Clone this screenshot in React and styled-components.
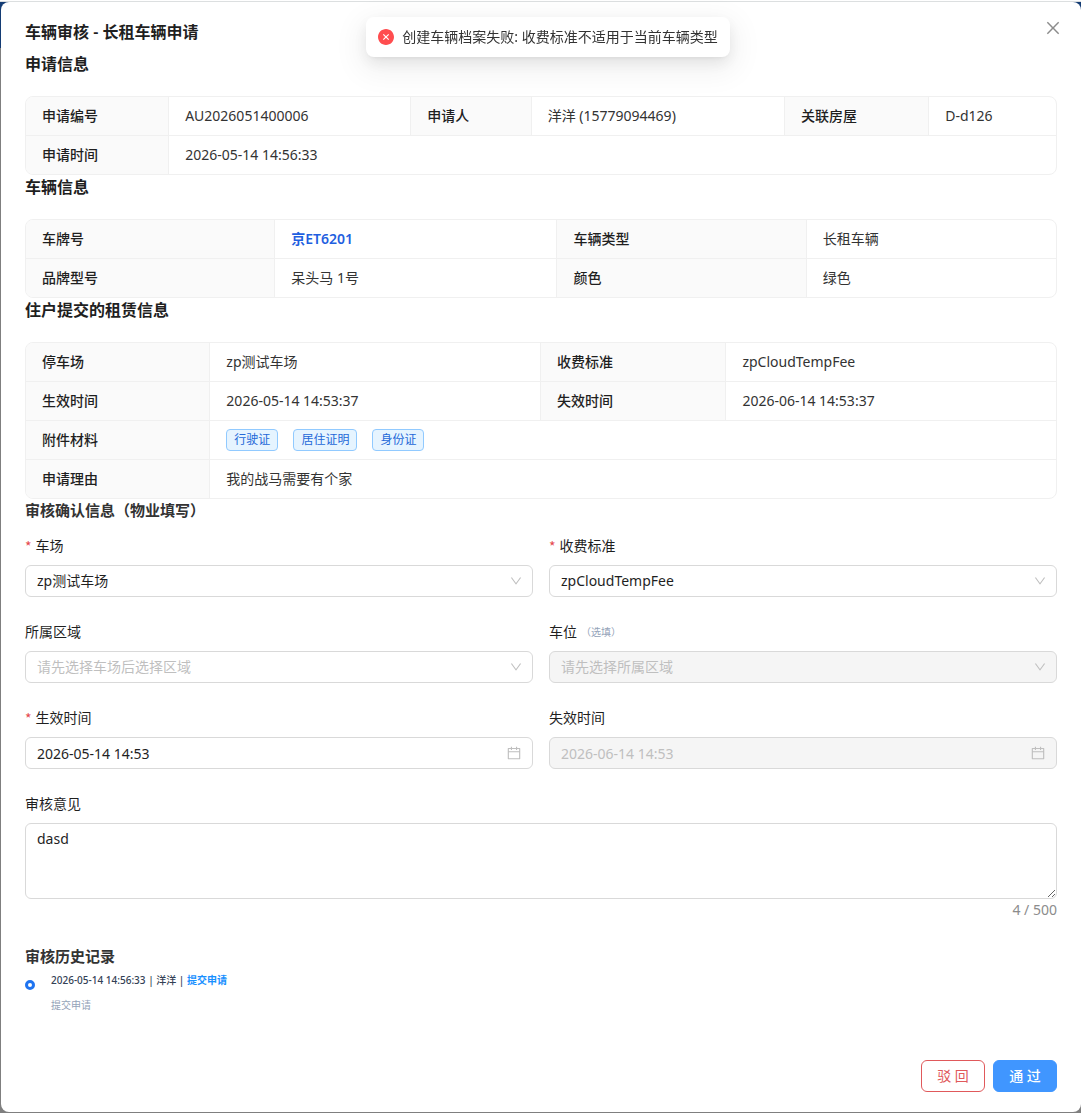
import { useState } from "react";
import styled, { createGlobalStyle } from "styled-components";
import {
  AiFillCloseCircle,
  AiOutlineCalendar,
  AiOutlineClose,
  AiOutlineDown,
} from "react-icons/ai";

const GlobalStyle = createGlobalStyle`
  *,
  *::before,
  *::after {
    box-sizing: border-box;
  }

  body {
    margin: 0;
    background: #7f7f7f;
    color: #1f1f1f;
    font-family: "Noto Sans", "Noto Sans CJK SC", sans-serif;
    font-size: 14px;
    line-height: 22px;
  }

  button,
  input,
  select,
  textarea {
    font: inherit;
    color: inherit;
  }
`;

const Backdrop = styled.div`
  display: flex;
  min-height: 100vh;
  padding: 2px 0 1px 1px;
  background:
    linear-gradient(#ffffff 1px, #dcdfe0 1px) top / 100% 2px no-repeat,
    linear-gradient(#143c74, #143c74) top / 100% 48px no-repeat,
    #7f7f7f;
`;

const Modal = styled.div`
  display: flex;
  flex: 1;
  flex-direction: column;
  min-width: 0;
  border-radius: 8px;
  background: #fff;
`;

const ModalHeader = styled.header`
  display: flex;
  align-items: flex-end;
  justify-content: space-between;
  padding: 10px 12px 0 24px;
`;

const ModalTitle = styled.h1`
  margin: 0;
  font-size: 16px;
  font-weight: 600;
  line-height: 24px;
`;

const CloseButton = styled.button`
  display: flex;
  align-items: center;
  justify-content: center;
  width: 32px;
  height: 32px;
  padding: 0;
  border: none;
  border-radius: 6px;
  background: transparent;
  color: #8c8c8c;
  font-size: 16px;
  cursor: pointer;

  &:hover {
    background: #f5f5f5;
  }
`;

const ModalBody = styled.main`
  flex: 1;
  padding: 8px 24px 0;
`;

const ModalFooter = styled.footer`
  display: flex;
  justify-content: flex-end;
  gap: 8px;
  padding: 0 24px 20px;
`;

const SectionTitle = styled.h2`
  margin: 0 0 20px;
  font-size: 16px;
  font-weight: 600;
  line-height: 24px;
`;

const SubTitle = styled.h3`
  margin: 0 0 ${({ $gap }) => $gap || "2px"};
  color: #333;
  font-size: 15px;
  font-weight: 600;
  line-height: 22px;
`;

const TableFrame = styled.div`
  overflow: hidden;
  border: 1px solid #f0f0f0;
  border-radius: 8px;
`;

const Table = styled.table`
  width: 100%;
  border-spacing: 0;
  table-layout: fixed;

  th,
  td {
    height: 39px;
    padding: 8px 16px;
    border-right: 1px solid #f0f0f0;
    border-bottom: 1px solid #f0f0f0;
    text-align: left;
  }

  th {
    background: #fafafa;
    font-weight: 500;
  }

  td {
    color: #333;
  }

  tr > :last-child {
    border-right: none;
  }

  tr:last-child > * {
    height: 38px;
    border-bottom: none;
  }
`;

const Col = styled.col`
  width: ${({ $width }) => $width};
`;

const Plate = styled.strong`
  color: #1f5fe0;
  font-weight: 600;
`;

const TagList = styled.div`
  display: flex;
  gap: 15px;
`;

const Tag = styled.a`
  padding: 0 7px;
  border: 1px solid #91caff;
  border-radius: 4px;
  background: #e6f4ff;
  color: #2468d8;
  font-size: 12px;
  line-height: 20px;
  text-decoration: none;
`;

const FormGrid = styled.form`
  display: grid;
  grid-template-columns: 1fr 1fr;
  gap: 24px 16px;
  margin-bottom: 24px;
`;

const Field = styled.div`
  display: flex;
  flex-direction: column;
  grid-column: ${({ $wide }) => ($wide ? "1 / -1" : "auto")};
  min-width: 0;
`;

const FieldLabel = styled.label`
  display: flex;
  align-items: center;
  margin-bottom: 8px;
`;

const Required = styled.span`
  margin-right: 4px;
  color: #e5484d;
  font-family: "Noto Sans CJK SC", sans-serif;
`;

const Optional = styled.span`
  margin-left: 4px;
  color: #94a3b8;
  font-size: 10px;
`;

const Control = styled.div`
  position: relative;
  color: ${({ $muted }) => ($muted ? "#bfbfbf" : "#1f1f1f")};

  select,
  input {
    display: block;
    width: 100%;
    height: 32px;
    padding: 0 32px 0 11px;
    border: 1px solid #d9d9d9;
    border-radius: 6px;
    outline: none;
    background: #fff;
    appearance: none;
  }

  select:disabled,
  input:disabled {
    background: #f5f5f5;
    color: #bfbfbf;
    opacity: 1;
  }

  svg {
    position: absolute;
    top: 0;
    right: 11px;
    height: 32px;
    color: #bfbfbf;
    pointer-events: none;
  }

  input + svg {
    right: 12px;
  }
`;

const TextArea = styled.textarea`
  display: block;
  width: 100%;
  height: 76px;
  padding: 4px 11px;
  border: 1px solid #d9d9d9;
  border-radius: 6px;
  outline: none;
  resize: vertical;
`;

const Counter = styled.span`
  color: #8c8c8c;
  text-align: right;
`;

const Timeline = styled.ol`
  margin: 0;
  padding: 0 0 42px;
  list-style: none;
`;

const TimelineItem = styled.li`
  display: flex;
  gap: 16px;
`;

const Dot = styled.span`
  width: 10px;
  height: 10px;
  margin-top: 11px;
  border: 3px solid #1f74f0;
  border-radius: 50%;
`;

const Entry = styled.div`
  font-size: 10px;
  line-height: 22px;
`;

const EntryTitle = styled.div`
  color: #334155;
  font-weight: 500;
`;

const EntryAction = styled.span`
  color: #1890ff;
  font-weight: 600;
`;

const EntryNote = styled.div`
  margin-top: 3px;
  color: #94a3b8;
`;

const Button = styled.button`
  min-width: 64px;
  height: 32px;
  padding: 0 15px;
  border: 1px solid ${({ $primary }) => ($primary ? "#4096ff" : "#e0595b")};
  border-radius: 6px;
  background: ${({ $primary }) => ($primary ? "#4096ff" : "#fff")};
  color: ${({ $primary }) => ($primary ? "#fff" : "#e0595b")};
  font-weight: ${({ $primary }) => ($primary ? 500 : 400)};
  cursor: pointer;
`;

const ToastLayer = styled.div`
  position: fixed;
  top: 17px;
  right: 0;
  left: 15px;
  display: flex;
  justify-content: center;
  pointer-events: none;
`;

const Toast = styled.div`
  display: flex;
  align-items: center;
  gap: 8px;
  padding: 9px 12px;
  border-radius: 8px;
  background: #fff;
  box-shadow:
    0 6px 16px 0 rgba(0, 0, 0, 0.08),
    0 3px 6px -4px rgba(0, 0, 0, 0.12),
    0 9px 28px 8px rgba(0, 0, 0, 0.05);
  color: #333;

  svg {
    color: #ff4d4f;
    font-size: 16px;
  }
`;

const ICON_BOX = "64 64 896 896";

const attachments = ["行驶证", "居住证明", "身份证"];

function Descriptions({ columns, rows }) {
  return (
    <TableFrame>
      <Table>
        <colgroup>
          {columns.map((width, index) => (
            <Col key={index} $width={width} />
          ))}
        </colgroup>
        <tbody>
          {rows.map((row) => (
            <tr key={row[0].label}>
              {row.map(({ label, value }, index) => [
                <th key={label} scope="row">
                  {label}
                </th>,
                <td
                  key={`${label}-value`}
                  colSpan={
                    index === row.length - 1
                      ? columns.length - row.length * 2 + 1
                      : 1
                  }
                >
                  {value}
                </td>,
              ])}
            </tr>
          ))}
        </tbody>
      </Table>
    </TableFrame>
  );
}

function FormField({ id, label, required, optional, wide, children }) {
  return (
    <Field $wide={wide}>
      <FieldLabel htmlFor={id}>
        {required && <Required>*</Required>}
        {label}
        {optional && <Optional>（选填）</Optional>}
      </FieldLabel>
      {children}
    </Field>
  );
}

function Select({ id, option, muted, disabled }) {
  return (
    <Control $muted={muted}>
      <select id={id} disabled={disabled}>
        <option>{option}</option>
      </select>
      <AiOutlineDown viewBox={ICON_BOX} size={12} />
    </Control>
  );
}

function DateInput({ id, value, disabled }) {
  return (
    <Control>
      <input id={id} type="text" defaultValue={value} disabled={disabled} />
      <AiOutlineCalendar viewBox={ICON_BOX} size={14} />
    </Control>
  );
}

export default function App() {
  const [comment, setComment] = useState("dasd");

  return (
    <>
      <GlobalStyle />
      <Backdrop>
        <Modal role="dialog" aria-labelledby="modal-title">
          <ModalHeader>
            <ModalTitle id="modal-title">车辆审核 - 长租车辆申请</ModalTitle>
            <CloseButton type="button" aria-label="关闭">
              <AiOutlineClose viewBox={ICON_BOX} />
            </CloseButton>
          </ModalHeader>

          <ModalBody>
            <SectionTitle>申请信息</SectionTitle>
            <Descriptions
              columns={["13.9%", "23.5%", "11.7%", "24.6%", "14%", "12.3%"]}
              rows={[
                [
                  { label: "申请编号", value: "AU2026051400006" },
                  { label: "申请人", value: "洋洋 (15779094469)" },
                  { label: "关联房屋", value: "D-d126" },
                ],
                [{ label: "申请时间", value: "2026-05-14 14:56:33" }],
              ]}
            />

            <SectionTitle>车辆信息</SectionTitle>
            <Descriptions
              columns={["24.2%", "27.4%", "24.2%", "24.2%"]}
              rows={[
                [
                  { label: "车牌号", value: <Plate>京ET6201</Plate> },
                  { label: "车辆类型", value: "长租车辆" },
                ],
                [
                  { label: "品牌型号", value: "呆头马 1号" },
                  { label: "颜色", value: "绿色" },
                ],
              ]}
            />

            <SectionTitle>住户提交的租赁信息</SectionTitle>
            <Descriptions
              columns={["17.9%", "32.1%", "18%", "32%"]}
              rows={[
                [
                  { label: "停车场", value: "zp测试车场" },
                  { label: "收费标准", value: "zpCloudTempFee" },
                ],
                [
                  { label: "生效时间", value: "2026-05-14 14:53:37" },
                  { label: "失效时间", value: "2026-06-14 14:53:37" },
                ],
                [
                  {
                    label: "附件材料",
                    value: (
                      <TagList>
                        {attachments.map((name) => (
                          <Tag key={name} href="#">
                            {name}
                          </Tag>
                        ))}
                      </TagList>
                    ),
                  },
                ],
                [{ label: "申请理由", value: "我的战马需要有个家" }],
              ]}
            />

            <SubTitle $gap="14px">审核确认信息（物业填写）</SubTitle>
            <FormGrid>
              <FormField id="lot" label="车场" required>
                <Select id="lot" option="zp测试车场" />
              </FormField>
              <FormField id="fee" label="收费标准" required>
                <Select id="fee" option="zpCloudTempFee" />
              </FormField>
              <FormField id="area" label="所属区域">
                <Select id="area" option="请先选择车场后选择区域" muted />
              </FormField>
              <FormField id="space" label="车位" optional>
                <Select id="space" option="请先选择所属区域" muted disabled />
              </FormField>
              <FormField id="start" label="生效时间" required>
                <DateInput id="start" value="2026-05-14 14:53" />
              </FormField>
              <FormField id="end" label="失效时间">
                <DateInput id="end" value="2026-06-14 14:53" disabled />
              </FormField>
              <FormField id="comment" label="审核意见" wide>
                <TextArea
                  id="comment"
                  maxLength={500}
                  value={comment}
                  onChange={(e) => setComment(e.target.value)}
                />
                <Counter>{comment.length} / 500</Counter>
              </FormField>
            </FormGrid>

            <SubTitle>审核历史记录</SubTitle>
            <Timeline>
              <TimelineItem>
                <Dot />
                <Entry>
                  <EntryTitle>
                    2026-05-14 14:56:33 | 洋洋 |{" "}
                    <EntryAction>提交申请</EntryAction>
                  </EntryTitle>
                  <EntryNote>提交申请</EntryNote>
                </Entry>
              </TimelineItem>
            </Timeline>
          </ModalBody>

          <ModalFooter>
            <Button type="button">驳 回</Button>
            <Button type="button" $primary>
              通 过
            </Button>
          </ModalFooter>
        </Modal>
      </Backdrop>

      <ToastLayer>
        <Toast role="alert">
          <AiFillCloseCircle viewBox={ICON_BOX} />
          创建车辆档案失败: 收费标准不适用于当前车辆类型
        </Toast>
      </ToastLayer>
    </>
  );
}
